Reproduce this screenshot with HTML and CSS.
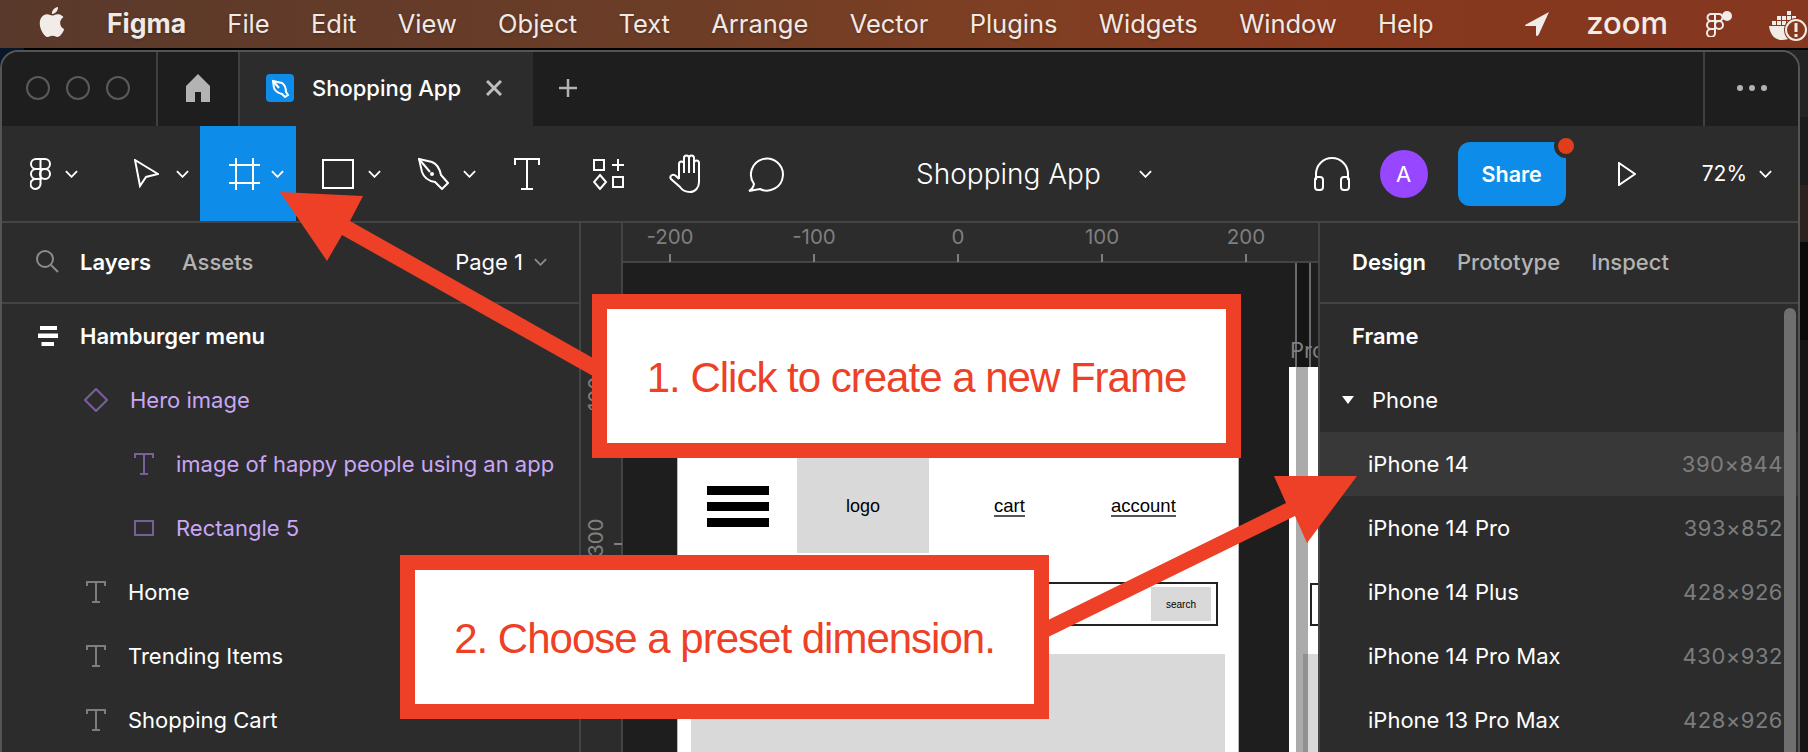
FILE: index.html

```html
<!DOCTYPE html>
<html lang="en">
<head>
    <meta charset="UTF-8">
    <title>Figma - Shopping App</title>
    <link rel="stylesheet" href="styles.css">
</head>
<body>
    <header class="menubar">
        <svg class="apple" viewBox="0 0 24 24"><path fill="#f1ece8" d="M12.152 6.896c-.948 0-2.415-1.078-3.96-1.04-2.04.027-3.91 1.183-4.961 3.014-2.117 3.675-.546 9.103 1.519 12.09 1.013 1.454 2.208 3.09 3.792 3.039 1.52-.065 2.09-.987 3.935-.987 1.831 0 2.35.987 3.96.948 1.637-.026 2.676-1.48 3.676-2.948 1.156-1.688 1.636-3.325 1.662-3.415-.039-.013-3.182-1.221-3.22-4.857-.026-3.04 2.48-4.494 2.597-4.559-1.429-2.09-3.623-2.324-4.39-2.376-2-.156-3.675 1.09-4.61 1.09zM15.53 3.83c.843-1.012 1.4-2.427 1.245-3.83-1.207.052-2.662.805-3.532 1.818-.78.896-1.454 2.338-1.273 3.714 1.338.104 2.715-.688 3.559-1.701"/></svg>
        <nav class="menu">
            <span class="menu-app">Figma</span>
            <span>File</span>
            <span>Edit</span>
            <span>View</span>
            <span>Object</span>
            <span>Text</span>
            <span>Arrange</span>
            <span>Vector</span>
            <span>Plugins</span>
            <span>Widgets</span>
            <span>Window</span>
            <span>Help</span>
        </nav>
        <div class="status">
            <svg class="status-location" viewBox="0 0 24 24"><path fill="#f1ece8" d="M24 0 L0 13 Q0 14 1 14 L11 14 L11 23 Q11 24 12 24 Q13 24 14 22z"/></svg>
            <span class="status-zoom">zoom</span>
            <svg class="status-figma" viewBox="0 0 26 26" fill="none" stroke="#f1ece8" stroke-width="2"><path d="M9 3H5a3.500 3.500 0 0 0 0 7h4zM9 3h4a3.500 3.500 0 0 1 0 7H9zM9 10H5a4 4 0 0 0 0 8h4z"/><circle cx="13" cy="14" r="4"/><path d="M5 18h4v4a4 4 0 1 1-4-4z"/><circle cx="21" cy="5" r="5" fill="#f1ece8" stroke="none"/></svg>
            <svg class="status-docker" viewBox="0 0 39 31"><path fill="#f1ece8" d="M8 6h4v4H8zM13 6h4v4h-4zM18 6h4v4h-4zM18 1h4v4h-4zM18 11h4v4h-4zM13 11h4v4h-4zM8 11h4v4H8zM3 11h4v4H3zM23 6h4v4h-4zM23 11h4v4h-4zM0 16h28v2c-2 8-7 12-15 12C5 30 1 24 0 16z"/><circle cx="27" cy="20" r="12" fill="#85391f"/><circle cx="27" cy="20" r="10" fill="#85391f" stroke="#f1ece8" stroke-width="2"/><path fill="#f1ece8" d="M25.500 13h3v9h-3zM25.500 24h3v3h-3z"/></svg>
        </div>
    </header>

    <div class="window">
        <div class="tabbar">
            <div class="traffic">
                <i></i><i></i><i></i>
            </div>
            <div class="home-tab">
                <svg viewBox="0 0 24 28" width="24" height="28"><path fill="#b3b3b3" d="M12 0 L24 12 V28 H15 V18 H9 V28 H0 V12z"/></svg>
            </div>
            <div class="file-tab">
                <span class="file-icon">
                    <svg viewBox="0 0 28 28" width="28" height="28" fill="none" stroke="#fff" stroke-width="2"><path d="M7 7 L16 9 C19 11 20 15 20 18 L22 21 L19 23 L16 20 C12 19 9 17 8 14z"/><path d="M7 7 L13 14"/></svg>
                </span>
                <span class="file-name">Shopping App</span>
                <svg class="file-close" viewBox="0 0 16 16" width="16" height="16" stroke="#bdbdbd" stroke-width="3"><path d="M1 1 L15 15M15 1 L1 15"/></svg>
            </div>
            <svg class="new-tab" viewBox="0 0 18 18" width="18" height="18" stroke="#b3b3b3" stroke-width="2.500"><path d="M9 0V18M0 9H18"/></svg>
            <div class="more">
                <i></i><i></i><i></i>
            </div>
        </div>

        <div class="toolbar">
            <div class="tool tool-figma">
                <svg width="21" height="32" viewBox="0 0 21 32" fill="none" stroke="#fff" stroke-width="2"><path d="M10.500 1H6a5 5 0 0 0 0 10h4.500zM10.500 1H15a5 5 0 0 1 0 10h-4.500zM10.500 11H6a5 5 0 0 0 0 10h4.500z"/><circle cx="15" cy="16" r="5"/><path d="M6 21h4.500v5a5 5 0 1 1-4.500-5z"/></svg>
                <svg class="chev" viewBox="0 0 14 8"><path d="M1 1 L7 7 L13 1"/></svg>
            </div>
            <div class="tool tool-move">
                <svg width="25" height="29" viewBox="0 0 25 29" fill="none" stroke="#fff" stroke-width="2"><path d="M1 1 L24 15 L12 18 L6 27z"/></svg>
                <svg class="chev" viewBox="0 0 14 8"><path d="M1 1 L7 7 L13 1"/></svg>
            </div>
            <div class="tool tool-frame">
                <svg width="31" height="32" viewBox="0 0 31 32" fill="none" stroke="#fff" stroke-width="2"><path d="M7 0V32M24 0V32M0 7H31M0 25H31"/></svg>
                <svg class="chev" viewBox="0 0 14 8"><path d="M1 1 L7 7 L13 1"/></svg>
            </div>
            <div class="tool tool-rect">
                <svg width="32" height="30" viewBox="0 0 32 30" fill="none" stroke="#fff" stroke-width="2"><rect x="1" y="1" width="30" height="28"/></svg>
                <svg class="chev" viewBox="0 0 14 8"><path d="M1 1 L7 7 L13 1"/></svg>
            </div>
            <div class="tool tool-pen">
                <svg width="31" height="32" viewBox="0 0 31 32" fill="none" stroke="#fff" stroke-width="2"><path d="M1 1 L14 4 C19 6 22 12 23 17 L30 25 L24 31 L17 24 C11 23 6 20 4 14z"/><path d="M1 1 L12 14"/><circle cx="14" cy="16" r="2" fill="#fff" stroke="none"/></svg>
                <svg class="chev" viewBox="0 0 14 8"><path d="M1 1 L7 7 L13 1"/></svg>
            </div>
            <div class="tool tool-text">
                <svg width="26" height="32" viewBox="0 0 26 32" fill="none" stroke="#fff" stroke-width="2"><path d="M1 7V1H25V7M13 1V31M7 31H19"/></svg>
            </div>
            <div class="tool tool-comps">
                <svg width="32" height="32" viewBox="0 0 32 32" fill="none" stroke="#fff" stroke-width="2"><rect x="1" y="2" width="10" height="10"/><path d="M25 1V13M19 7H31M7 17 L13 24 L7 31 L1 24z"/><rect x="20" y="19" width="10" height="10"/></svg>
            </div>
            <div class="tool tool-hand">
                <svg width="36" height="39" viewBox="0 0 36 39" fill="none" stroke="#fff" stroke-width="2"><path d="M10 25V10a2.500 2.500 0 0 1 5 0v9M15 19V4a2.500 2.500 0 0 1 5 0v15M20 19V4a2.500 2.500 0 0 1 5 0v15M25 19V9a2.500 2.500 0 0 1 5 0v19c0 6-4 10-9 10-5 0-8-2-10-5L2 25c-2-3 2-6 5-3l3 3"/></svg>
            </div>
            <div class="tool tool-comment">
                <svg width="36" height="36" viewBox="0 0 36 36" fill="none" stroke="#fff" stroke-width="2"><path d="M6 28A16 16 0 1 1 12 33L1 35Q5 33 6 28z"/></svg>
            </div>
            <div class="file-title">
                <span>Shopping App</span>
                <svg class="chev" viewBox="0 0 14 8"><path d="M1 1 L7 7 L13 1"/></svg>
            </div>
            <div class="toolbar-right">
                <svg width="36" height="35" viewBox="0 0 36 35" fill="none" stroke="#fff" stroke-width="2"><path d="M2 24V18a16 16 0 0 1 32 0V24"/><rect x="1" y="21" width="8" height="13" rx="3"/><rect x="27" y="21" width="8" height="13" rx="3"/></svg>
                <span class="avatar">A</span>
                <button class="share">Share<i></i></button>
                <svg width="18" height="24" viewBox="0 0 18 24" fill="none" stroke="#fff" stroke-width="2"><path d="M1 1 L17 12 L1 23z"/></svg>
                <div class="zoom-level">
                    <span>72%</span>
                    <svg class="chev" viewBox="0 0 14 8"><path d="M1 1 L7 7 L13 1"/></svg>
                </div>
            </div>
        </div>

        <main class="main">
            <aside class="layers">
                <div class="panel-head">
                    <svg class="search-icon" width="23" height="23" viewBox="0 0 23 23" fill="none" stroke="#8c8c8c" stroke-width="2"><circle cx="9" cy="9" r="8"/><path d="M15 15 L22 22"/></svg>
                    <span class="tab-on">Layers</span>
                    <span class="tab-off">Assets</span>
                    <span class="page">Page 1</span>
                    <svg class="chev chev-dim" viewBox="0 0 14 8"><path d="M1 1 L7 7 L13 1"/></svg>
                </div>
                <div class="layer layer-top">
                    <svg class="layer-icon" width="20" height="20" viewBox="0 0 20 20" fill="#fff"><path d="M2 0H19V4H2zM0 7.500H20V12H0zM3.500 16H16V20H3.500z"/></svg>
                    <span>Hamburger menu</span>
                </div>
                <div class="layer layer-1 purple">
                    <svg class="layer-icon" width="24" height="24" viewBox="0 0 24 24" fill="none" stroke="#7a5f9e" stroke-width="2"><path d="M12 1 L23 12 L12 23 L1 12z"/></svg>
                    <span>Hero image</span>
                </div>
                <div class="layer layer-2 purple">
                    <svg class="layer-icon" width="20" height="22" viewBox="0 0 20 22" fill="none" stroke="#7a5f9e" stroke-width="2"><path d="M1 5V1H19V5M10 1V21M6 21H14"/></svg>
                    <span>image of happy people using an app</span>
                </div>
                <div class="layer layer-2 purple">
                    <svg class="layer-icon" width="20" height="16" viewBox="0 0 20 16" fill="none" stroke="#7a5f9e" stroke-width="2"><rect x="1" y="1" width="18" height="14"/></svg>
                    <span>Rectangle 5</span>
                </div>
                <div class="layer layer-1">
                    <svg class="layer-icon" width="20" height="22" viewBox="0 0 20 22" fill="none" stroke="#7d7d7d" stroke-width="2"><path d="M1 5V1H19V5M10 1V21M6 21H14"/></svg>
                    <span>Home</span>
                </div>
                <div class="layer layer-1">
                    <svg class="layer-icon" width="20" height="22" viewBox="0 0 20 22" fill="none" stroke="#7d7d7d" stroke-width="2"><path d="M1 5V1H19V5M10 1V21M6 21H14"/></svg>
                    <span>Trending Items</span>
                </div>
                <div class="layer layer-1">
                    <svg class="layer-icon" width="20" height="22" viewBox="0 0 20 22" fill="none" stroke="#7d7d7d" stroke-width="2"><path d="M1 5V1H19V5M10 1V21M6 21H14"/></svg>
                    <span>Shopping Cart</span>
                </div>
            </aside>

            <section class="canvas">
                <div class="corner"></div>
                <div class="ruler-x">
                    <span class="mark" style="left: 47px">-200</span>
                    <span class="mark" style="left: 191px">-100</span>
                    <span class="mark" style="left: 335px">0</span>
                    <span class="mark" style="left: 479px">100</span>
                    <span class="mark" style="left: 623px">200</span>
                </div>
                <div class="ruler-y">
                    <span class="mark-y" style="top: 101px">100</span>
                    <span class="mark-y" style="top: 245px">300</span>
                </div>
                <div class="stage">
                    <div class="frame frame-one">
                        <div class="burger"><i></i><i></i><i></i></div>
                        <div class="site-logo">logo</div>
                        <a class="site-link link-cart">cart</a>
                        <a class="site-link">account</a>
                        <div class="site-search"><span>search</span></div>
                        <div class="site-hero"></div>
                    </div>
                    <div class="guide"></div>
                    <div class="frame-label">Pro</div>
                    <div class="frame frame-two">
                        <div class="site-search-two"></div>
                        <div class="site-hero-two"></div>
                        <div class="frame-band"></div>
                    </div>
                </div>
            </section>

            <aside class="design">
                <div class="panel-head">
                    <span class="tab-on">Design</span>
                    <span class="tab-off">Prototype</span>
                    <span class="tab-off">Inspect</span>
                </div>
                <div class="preset-title">Frame</div>
                <div class="preset-group"><i></i>Phone</div>
                <div class="preset preset-on"><span>iPhone 14</span><span class="size">390×844</span></div>
                <div class="preset"><span>iPhone 14 Pro</span><span class="size">393×852</span></div>
                <div class="preset"><span>iPhone 14 Plus</span><span class="size">428×926</span></div>
                <div class="preset"><span>iPhone 14 Pro Max</span><span class="size">430×932</span></div>
                <div class="preset"><span>iPhone 13 Pro Max</span><span class="size">428×926</span></div>
                <div class="scrollbar"></div>
            </aside>
        </main>
    </div>

    <!-- annotations on top of the screenshot -->
    <svg class="arrows" viewBox="0 0 1808 752">
        <path fill="#ee4026" d="M280 192 L363 196 L350 221 L600 362 L600 380 L342 235 L327 261z"/>
        <path fill="#ee4026" d="M1357 476 L1307 543 L1295 516 L1040 641 L1040 624 L1286 503 L1274 476z"/>
    </svg>
    <div class="callout callout-one">1. Click to create a new Frame</div>
    <div class="callout callout-two">2. Choose a preset dimension.</div>
</body>
</html>
```

FILE: styles.css

```css
* {
    margin: 0;
    padding: 0;
    box-sizing: border-box;
}

body {
    width: 1808px;
    height: 752px;
    position: relative;
    overflow: hidden;
    background:
        linear-gradient(90deg, #08182a 0 24px, transparent 24px),
        linear-gradient(180deg, #000 0 50px, #242424 50px 117px, #1c1c1c 117px 185px, #2b2220 185px 242px, #0a0a0a 242px 340px, #151515 340px);
    font-family: Inter, "Noto Sans", sans-serif;
    color: #fff;
}

/* mac menu bar */
.menubar {
    height: 48px;
    display: flex;
    align-items: center;
    background: linear-gradient(90deg, #59392b 0%, #6b3d27 35%, #7e3f23 55%, #87391f 75%, #85371f 100%);
}

.apple {
    width: 30px;
    height: 32px;
    margin-left: 37px;
    margin-top: -5px;
}

.menu {
    display: flex;
    align-items: baseline;
    gap: 41.300px;
    margin-left: 40px;
    margin-top: -2px;
    font-size: 25.500px;
    color: #f1e9e4;
    text-shadow: 0 1px 3px rgba(0,0,0,0.25);
}

.menu-app {
    font-size: 26.500px;
    font-weight: 700;
}

.status {
    margin-left: auto;
    display: flex;
    align-items: center;
}

.status-location {
    width: 24px;
    height: 24px;
    margin-right: 37px;
}

.status-zoom {
    font-size: 31px;
    font-weight: 500;
    line-height: 30px;
    color: #f1ece8;
    margin-top: -2px;
    margin-right: 38px;
}

.status-figma {
    width: 26px;
    height: 26px;
    margin-right: 37px;
}

.status-docker {
    width: 39px;
    height: 31px;
    margin-top: 2px;
}

/* app window */
.window {
    width: 1800px;
    height: 702px;
    margin-top: 2px;
    background: #2c2c2c;
    border: 2px solid #555;
    border-bottom: 0;
    border-radius: 18px 18px 0 0;
    overflow: hidden;
}

.tabbar {
    height: 74px;
    display: flex;
    align-items: center;
    background: #1e1e1e;
    position: relative;
}

.traffic {
    width: 156px;
    height: 100%;
    display: flex;
    align-items: center;
    gap: 16px;
    padding-left: 24px;
    padding-bottom: 2px;
    border-right: 2px solid #404040;
}

.traffic i {
    width: 24px;
    height: 24px;
    border: 2px solid #5a5a5a;
    border-radius: 50%;
}

.home-tab {
    width: 80px;
    height: 100%;
    display: flex;
    align-items: center;
    justify-content: center;
    padding-bottom: 2px;
}

.file-tab {
    width: 295px;
    height: 100%;
    display: flex;
    align-items: center;
    background: #2c2c2c;
    border-left: 2px solid #404040;
    padding-left: 26px;
    padding-bottom: 2px;
}

.file-icon {
    width: 28px;
    height: 28px;
    background: #0d8ce9;
    border-radius: 4px;
    display: flex;
    margin-right: 18px;
}

.file-name {
    font-size: 22px;
    font-weight: 500;
    width: 174px;
}

.new-tab {
    margin-left: 26px;
    margin-bottom: 2px;
}

.more {
    position: absolute;
    left: 1701px;
    top: 0;
    bottom: 0;
    right: 0;
    display: flex;
    align-items: center;
    gap: 6px;
    padding-left: 32px;
    padding-bottom: 2px;
    border-left: 2px solid #404040;
}

.more i {
    width: 6px;
    height: 6px;
    border-radius: 50%;
    background: #b3b3b3;
}

.toolbar {
    height: 97px;
    display: flex;
    align-items: center;
    border-bottom: 2px solid #444;
}

.tool {
    display: flex;
    align-items: center;
    height: 95px;
    gap: 14px;
}

.chev {
    width: 13px;
    height: 8px;
    fill: none;
    stroke: #fff;
    stroke-width: 2;
}

.chev-dim {
    stroke: #8c8c8c;
}

.tool-figma { margin-left: 28px; }
.tool-move { margin-left: 56px; gap: 17px; }
.tool-frame { margin-left: 11px; width: 96px; padding-left: 29px; gap: 11px; background: #0d8ce9; }
.tool-rect { margin-left: 26px; }
.tool-pen { margin-left: 37px; }
.tool-text { margin-left: 38px; }
.tool-comps { margin-left: 53px; }
.tool-hand { margin-left: 44px; }
.tool-comment { margin-left: 43px; }

.file-title {
    margin-left: 132px;
    display: flex;
    align-items: center;
    gap: 38px;
    font-size: 28px;
    font-weight: 300;
}

.toolbar-right {
    margin-left: auto;
    display: flex;
    align-items: center;
}

.toolbar-right > svg:first-child {
    margin-right: 30px;
}

.avatar {
    width: 48px;
    height: 48px;
    border-radius: 50%;
    background: #9747ff;
    display: flex;
    align-items: center;
    justify-content: center;
    font-size: 22px;
    margin-right: 30px;
}

.share {
    width: 108px;
    height: 64px;
    background: #0d8ce9;
    border: 0;
    border-radius: 12px;
    color: #fff;
    font-family: Inter, sans-serif;
    font-size: 21.500px;
    font-weight: 600;
    position: relative;
    margin-right: 52px;
}

.share i {
    position: absolute;
    left: 96px;
    top: -8px;
    width: 24px;
    height: 24px;
    background: #e03e1a;
    border: 4px solid #2c2c2c;
    border-radius: 50%;
}

.zoom-level {
    display: flex;
    align-items: center;
    gap: 12px;
    margin-left: 66px;
    margin-right: 26px;
    font-size: 21px;
}

/* three columns */
.main {
    height: 529px;
    display: flex;
}

.layers {
    width: 579px;
    border-right: 2px solid #444;
    flex-shrink: 0;
}

.panel-head {
    height: 81px;
    display: flex;
    align-items: center;
    border-bottom: 2px solid #444;
    padding-bottom: 2px;
    font-size: 22px;
    font-weight: 600;
}

.search-icon {
    margin-left: 34px;
    margin-right: 21px;
}

.tab-on {
    color: #fff;
}

.tab-off {
    color: #b3b3b3;
    font-weight: 500;
    margin-left: 31px;
}

.page {
    margin-left: auto;
    font-weight: 400;
    margin-right: 11px;
}

.panel-head .chev-dim {
    margin-right: 32px;
}

.layer {
    height: 64px;
    display: flex;
    align-items: center;
    font-size: 22px;
    font-weight: 400;
    white-space: nowrap;
}

.layer-top {
    font-weight: 600;
    padding-left: 36px;
}

.layer-top .layer-icon { margin-right: 22px; }
.layer-1 { padding-left: 84px; }
.layer-1 .layer-icon { margin-right: 22px; }
.layer-2 { padding-left: 132px; }
.layer-2 .layer-icon { margin-right: 22px; }
.purple { color: #c9a7f5; }
.layer-1.purple { padding-left: 82px; }

/* canvas and rulers */
.canvas {
    width: 737px;
    flex-shrink: 0;
    display: grid;
    grid-template-columns: 42px 1fr;
    grid-template-rows: 40px 1fr;
}

.corner {
    border-right: 2px solid #444;
}

.ruler-x {
    position: relative;
    border-bottom: 2px solid #444;
}

.mark {
    position: absolute;
    top: 0;
    width: 60px;
    margin-left: -30px;
    text-align: center;
    line-height: 28px;
    font-size: 20.5px;
    color: #7f7f7f;
}

.mark::after {
    content: "";
    position: absolute;
    left: 29px;
    top: 31px;
    width: 2px;
    height: 8px;
    background: #7f7f7f;
}

.ruler-y {
    position: relative;
    border-right: 2px solid #444;
}

.mark-y {
    position: absolute;
    left: 1px;
    width: 28px;
    height: 60px;
    writing-mode: vertical-rl;
    transform: rotate(180deg);
    text-align: center;
    font-size: 20.5px;
    line-height: 28px;
    color: #7f7f7f;
}

/* the box is turned 180deg, so right and bottom read as left and top */
.mark-y::after {
    content: "";
    position: absolute;
    right: 32px;
    bottom: 35px;
    width: 8px;
    height: 2px;
    background: #7f7f7f;
}

.stage {
    background: #1e1e1e;
    position: relative;
    overflow: hidden;
}

.frame {
    position: absolute;
    background: #fff;
}

.frame-one {
    left: 54px;
    top: 100px;
    width: 562px;
    height: 400px;
    border: 1px solid #bbb;
    border-bottom: 0;
}

.burger {
    position: absolute;
    left: 29px;
    top: 122px;
    width: 62px;
    display: flex;
    flex-direction: column;
    gap: 7px;
}

.burger i {
    height: 9px;
    background: #000;
}

.site-logo {
    position: absolute;
    left: 119px;
    top: 60px;
    width: 132px;
    height: 129px;
    background: #d9d9d9;
    color: #000;
    font-size: 18px;
    line-height: 20px;
    font-family: "Liberation Sans", sans-serif;
    display: flex;
    align-items: flex-end;
    justify-content: center;
    padding-bottom: 37px;
}

.site-link {
    position: absolute;
    left: 433px;
    top: 132px;
    font-family: "Liberation Sans", sans-serif;
    font-size: 18.500px;
    line-height: 19px;
    color: #000;
    border-bottom: 2px solid #555;
}

.link-cart {
    left: 316px;
}

.site-search {
    position: absolute;
    left: 200px;
    top: 218px;
    width: 340px;
    height: 44px;
    border: 2px solid #222;
    display: flex;
    justify-content: flex-end;
    align-items: center;
    padding-right: 5px;
}

.site-search span {
    width: 60px;
    height: 34px;
    background: #d9d9d9;
    color: #000;
    font-family: "Liberation Sans", sans-serif;
    font-size: 10px;
    display: flex;
    align-items: center;
    justify-content: center;
}

.site-hero {
    position: absolute;
    left: 13px;
    top: 290px;
    width: 534px;
    height: 120px;
    background: #d9d9d9;
}

.guide {
    position: absolute;
    left: 672px;
    top: 0;
    width: 16px;
    height: 104px;
    background: #151515;
    border-left: 2px solid #6a6a6a;
    border-right: 2px solid #6a6a6a;
}

.frame-label {
    position: absolute;
    left: 667px;
    top: 74px;
    font-size: 22px;
    color: #7f7f7f;
}

.frame-two {
    left: 666px;
    top: 104px;
    width: 40px;
    height: 400px;
}

.frame-band {
    position: absolute;
    left: 7px;
    top: 0;
    width: 12px;
    height: 100%;
    background: rgba(0,0,0,0.33);
}

.site-search-two {
    position: absolute;
    left: 21px;
    top: 216px;
    width: 30px;
    height: 43px;
    border: 2px solid #222;
}

.site-hero-two {
    position: absolute;
    left: 14px;
    top: 287px;
    width: 30px;
    height: 120px;
    background: #d9d9d9;
}

/* right panel */
.design {
    flex: 1;
    border-left: 2px solid #444;
    position: relative;
}

.design .panel-head {
    padding-left: 32px;
}

.preset-title {
    height: 64px;
    display: flex;
    align-items: center;
    padding-left: 32px;
    font-size: 22px;
    font-weight: 600;
}

.preset-group {
    height: 64px;
    display: flex;
    align-items: center;
    padding-left: 22px;
    font-size: 22px;
}

.preset-group i {
    width: 0;
    height: 0;
    border-left: 6px solid transparent;
    border-right: 6px solid transparent;
    border-top: 8px solid #fff;
    margin-right: 18px;
}

.preset {
    height: 64px;
    display: flex;
    align-items: center;
    justify-content: space-between;
    padding: 0 15px 0 48px;
    font-size: 22px;
}

.preset-on {
    background: #383838;
}

.size {
    color: #7d7d7d;
    letter-spacing: 0.5px;
}

.scrollbar {
    position: absolute;
    left: 464px;
    top: 85px;
    width: 12px;
    bottom: 0;
    border-radius: 6px 6px 0 0;
    background: #6f6f6f;
}

/* red annotations */
.arrows {
    position: absolute;
    left: 0;
    top: 0;
    width: 1808px;
    height: 752px;
}

.callout {
    position: absolute;
    height: 164px;
    background: #fff;
    border: 15px solid #ee4026;
    color: #ee4026;
    font-family: "Liberation Sans", Arial, sans-serif;
    font-size: 42px;
    letter-spacing: -1px;
    display: flex;
    align-items: center;
    justify-content: center;
    padding-top: 3px;
}

.callout-one {
    left: 592px;
    top: 294px;
    width: 649px;
}

.callout-two {
    left: 400px;
    top: 555px;
    width: 649px;
}
```
